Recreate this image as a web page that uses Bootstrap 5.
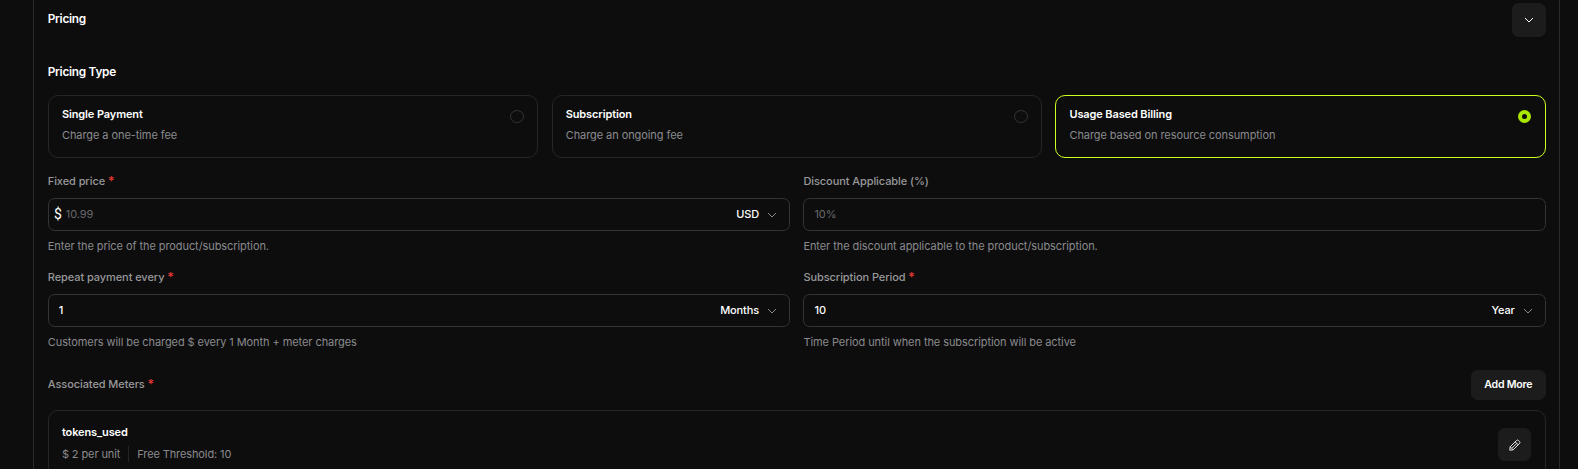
<!DOCTYPE html>
<html lang="en" data-bs-theme="dark">
<head>
<meta charset="utf-8">
<meta name="viewport" content="width=device-width, initial-scale=1">
<title>Pricing</title>
<link href="https://cdn.jsdelivr.net/npm/bootstrap@5.3.0/dist/css/bootstrap.min.css" rel="stylesheet">
<style>
  html, body { height: 100%; overflow: hidden; }
  body { background: #0d0d0d; color: #fff; font: 400 11px/16px Inter, sans-serif; letter-spacing: -.075px; }
  .panel { margin: 0 18px 0 33px; padding: 3px 13.3px 0 13.75px; height: 469px; overflow: hidden; border: solid #2a2a2a; border-width: 0 1px; }
  .heading { font-size: 11.8px; font-weight: 600; line-height: 18px; letter-spacing: -.27px; margin: 0; }
  .panel-title { margin-top: 7px; }
  .section-title { margin-top: 26px; }
  .tool { background: #1c1c1c; color: #fff; border: 0; border-radius: 6.67px; padding: 0; width: 34px; height: 34px; }
  .tool:hover { background: #262626; }
  .type-grid { display: grid; grid-template-columns: repeat(3, 1fr); gap: 13.33px; margin-top: 14px; }
  .tile { border: 1px solid #262628; border-radius: 10px; }
  .type-tile { height: 63px; padding: 10px 13.2px; }
  .type-tile.active { border-color: #ccff1f; }
  .strong { font-weight: 600; letter-spacing: -.12px; }
  .muted { color: #8a8a8d; }
  .type-tile .muted { margin-top: 5px; }
  .dot { width: 14px; height: 13px; border: 1px solid #333336; border-radius: 50%; margin: 4px 0 0; flex: none; }
  .active .dot { width: 13px; border: 4px solid #a9e600; margin-right: 1px; }
  .field-grid { display: grid; grid-template-columns: 1fr 1fr; column-gap: 13.33px; row-gap: 15px; margin-top: 15px; }
  .caption { color: #98989a; font-weight: 500; }
  .req { color: #f03a36; font-size: 12.5px; line-height: 1; vertical-align: -1px; }
  .box { height: 33px; border: 1px solid #343436; border-radius: 6.67px; margin: 9px 0 7px; padding: 0 12px 0 10px; }
  .price-box { padding-left: 5.3px; }
  .dollar { font: 400 14px/16px Roboto, sans-serif; position: relative; top: -1px; }
  .box input { background: none; border: 0; outline: 0; padding: 0 0 1px; color: #fff; font-weight: 500; letter-spacing: inherit; min-width: 0; }
  .box input::placeholder { color: #68686b; opacity: 1; font-weight: 400; }
  .unit { font-weight: 500; padding-bottom: 1px; letter-spacing: -.12px; }
  .meters-head { margin-top: 20px; }
  .meters-head .caption { padding-bottom: 2px; }
  .add { width: 75px; height: 30px; font-weight: 600; font-size: 10.6px; letter-spacing: -.25px; }
  .meter { margin-top: 10px; padding: 13px 13.6px 12px 13.2px; height: 80px; }
  .meter-facts { margin-top: 6px; gap: 8px; letter-spacing: -.11px; }
  .edit { width: 33px; height: 33px; margin-top: 4px; }
  .sep { width: 1px; height: 16px; background: #242426; }
</style>
</head>
<body>
<svg class="d-none">
  <symbol id="chev" viewBox="0 0 10 10"><path d="M1 3l4 4 4-4" fill="none" stroke="currentColor"/></symbol>
</svg>
<main class="panel">
  <header class="d-flex justify-content-between align-items-start">
    <h2 class="heading panel-title">Pricing</h2>
    <button class="tool d-flex align-items-center justify-content-center" aria-label="Collapse"><svg width="10" height="10"><use href="#chev"/></svg></button>
  </header>
  <h3 class="heading section-title">Pricing Type</h3>

  <section class="type-grid">
    <div class="tile type-tile d-flex justify-content-between">
      <div><div class="strong">Single Payment</div><div class="muted">Charge a one-time fee</div></div><span class="dot"></span>
    </div>
    <div class="tile type-tile d-flex justify-content-between">
      <div><div class="strong">Subscription</div><div class="muted">Charge an ongoing fee</div></div><span class="dot"></span>
    </div>
    <div class="tile type-tile active d-flex justify-content-between">
      <div><div class="strong">Usage Based Billing</div><div class="muted">Charge based on resource consumption</div></div><span class="dot"></span>
    </div>
  </section>

  <section class="field-grid">
    <div>
      <label class="caption d-block">Fixed price <span class="req">*</span></label>
      <div class="box price-box d-flex align-items-center">
        <span class="dollar">$</span>
        <input class="flex-grow-1 ms-1" placeholder="10.99">
        <span class="unit me-2">USD</span><svg class="muted" width="10" height="10"><use href="#chev"/></svg>
      </div>
      <div class="muted">Enter the price of the product/subscription.</div>
    </div>
    <div>
      <label class="caption d-block">Discount Applicable (%)</label>
      <div class="box d-flex align-items-center"><input class="flex-grow-1" placeholder="10%"></div>
      <div class="muted">Enter the discount applicable to the product/subscription.</div>
    </div>
    <div>
      <label class="caption d-block">Repeat payment every <span class="req">*</span></label>
      <div class="box d-flex align-items-center">
        <input class="flex-grow-1" value="1">
        <span class="unit me-2">Months</span><svg class="muted" width="10" height="10"><use href="#chev"/></svg>
      </div>
      <div class="muted">Customers will be charged $ every 1 Month + meter charges</div>
    </div>
    <div>
      <label class="caption d-block">Subscription Period <span class="req">*</span></label>
      <div class="box d-flex align-items-center">
        <input class="flex-grow-1" value="10">
        <span class="unit me-2">Year</span><svg class="muted" width="10" height="10"><use href="#chev"/></svg>
      </div>
      <div class="muted">Time Period until when the subscription will be active</div>
    </div>
  </section>

  <div class="meters-head d-flex justify-content-between align-items-center">
    <label class="caption">Associated Meters <span class="req">*</span></label>
    <button class="tool add">Add More</button>
  </div>
  <section class="tile meter d-flex justify-content-between">
    <div>
      <div class="strong">tokens_used</div>
      <div class="muted meter-facts d-flex align-items-center"><span>$ 2 per unit</span><span class="sep"></span><span>Free Threshold: 10</span></div>
    </div>
    <button class="tool edit d-flex align-items-center justify-content-center" aria-label="Edit">
      <svg width="12" height="12" viewBox="0 0 12 12" fill="none" stroke="#e8e8e8" stroke-linejoin="round"><path d="M.8 11.2l.4-3.4L7.5 1.5q1-1 2 0l1 1q1 1 0 2L4.2 10.8zM6.2 2.8l3 3M1.2 7.8l3 3M3 9.2l5-5"/></svg>
    </button>
  </section>
</main>
<script src="https://cdn.jsdelivr.net/npm/bootstrap@5.3.0/dist/js/bootstrap.bundle.min.js"></script>
</body>
</html>
